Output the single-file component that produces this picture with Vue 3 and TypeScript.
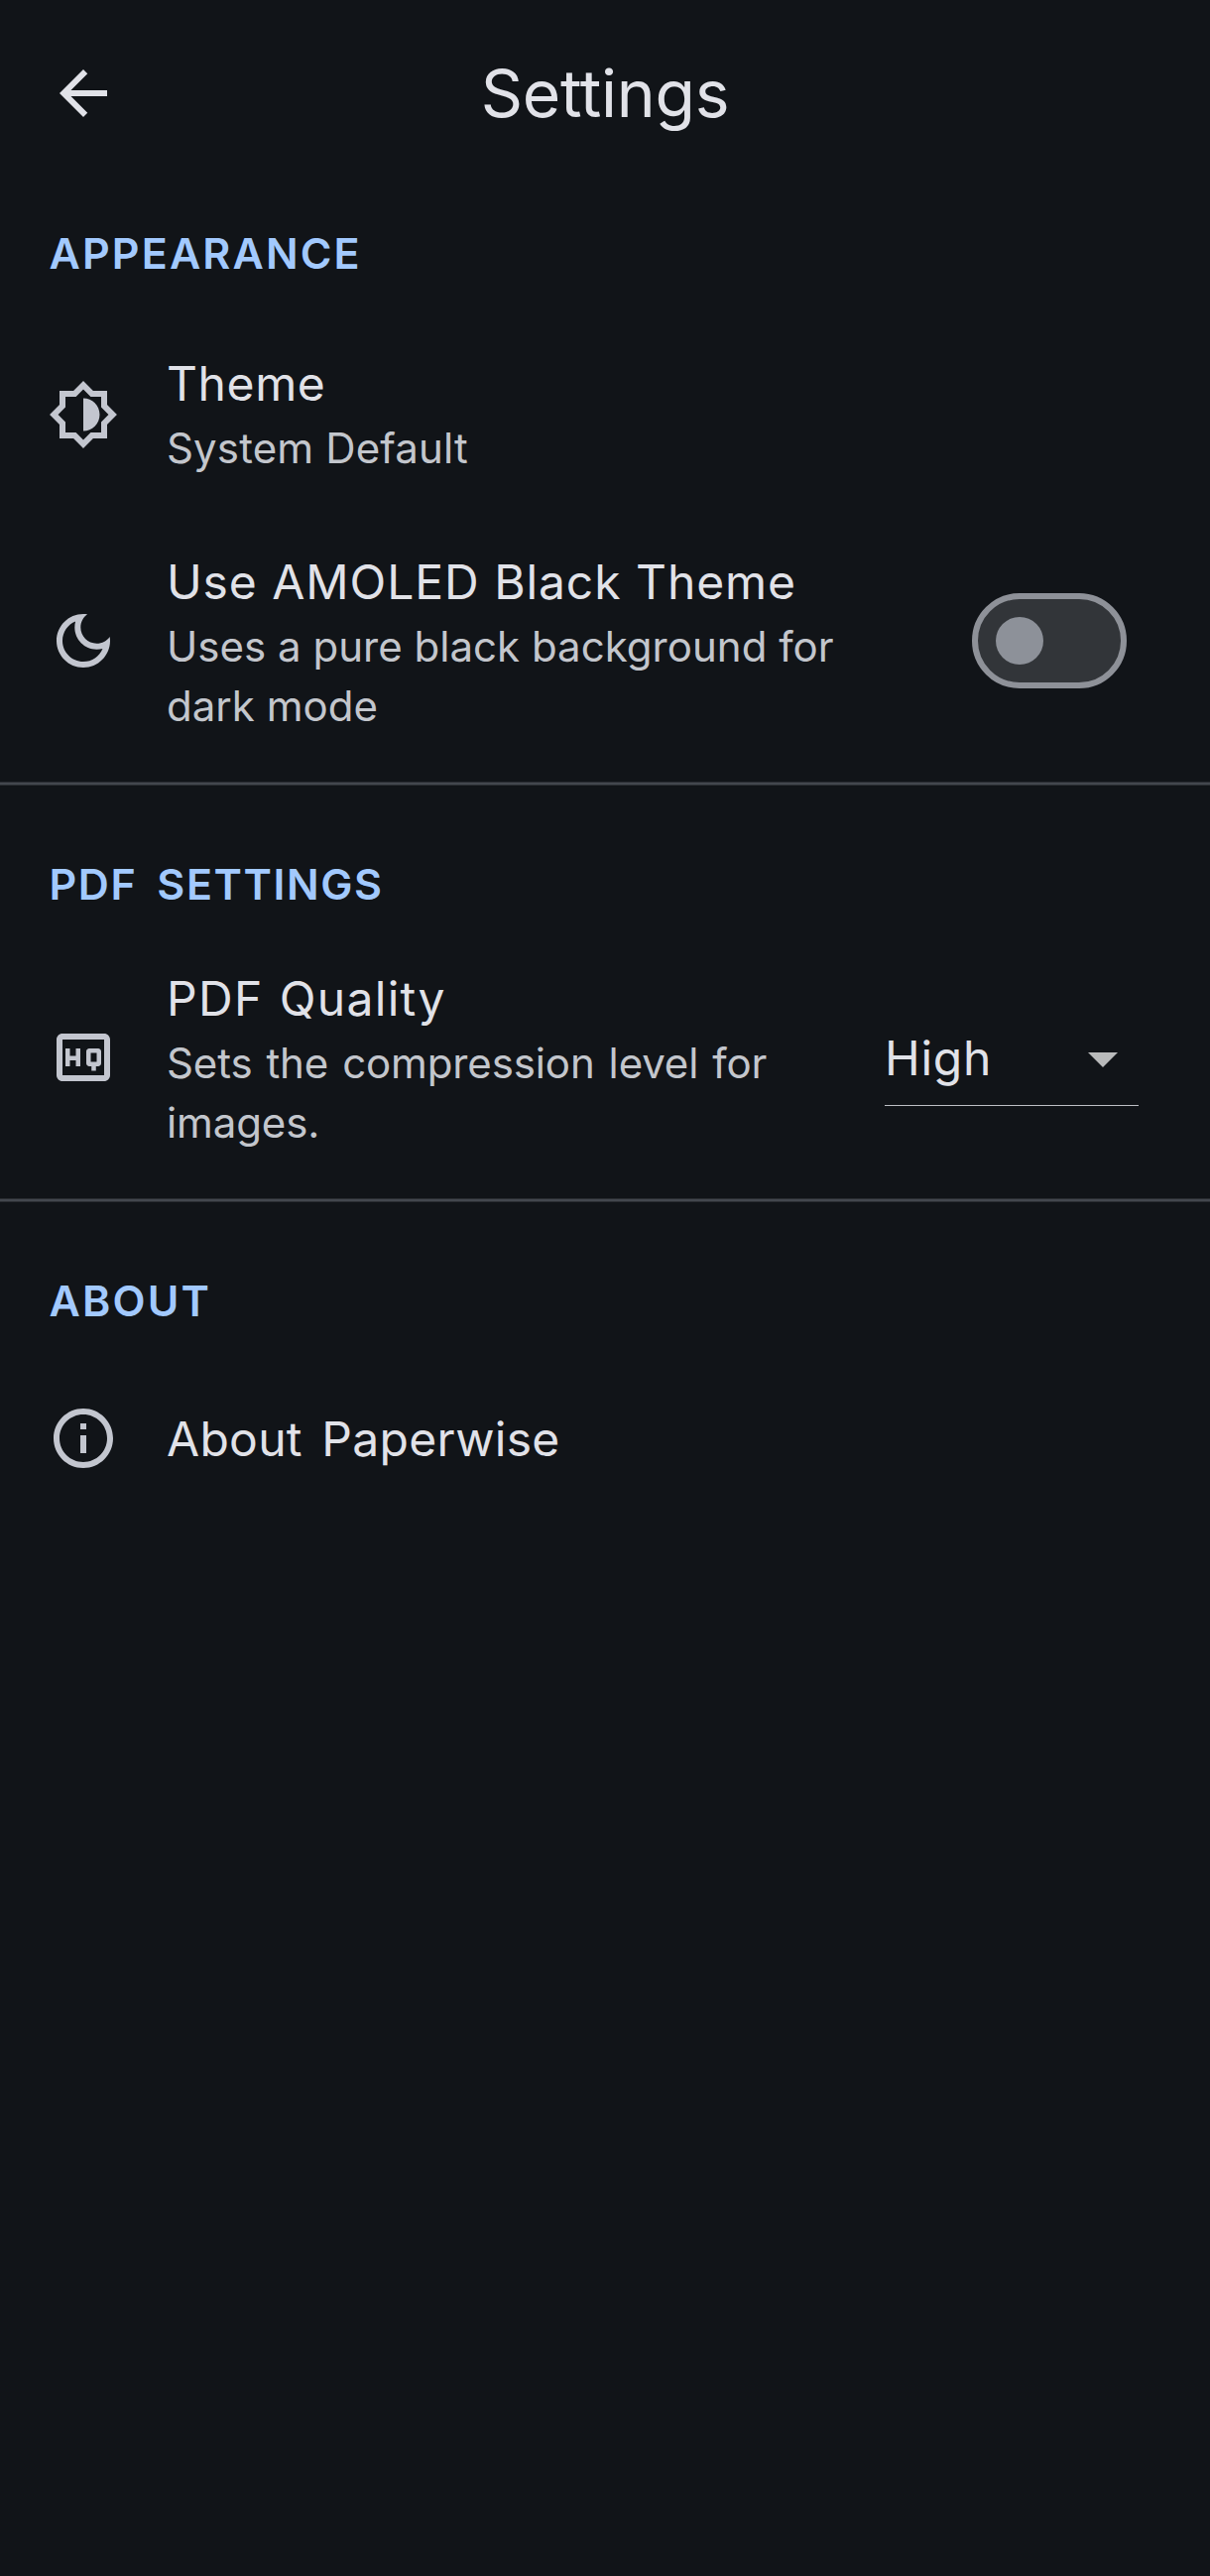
<script setup lang="ts">
import { ref } from 'vue'

const amoled = ref(false)
const quality = ref('High')
</script>

<template>
  <main class="screen">
    <header class="bar">
      <svg class="icon back" viewBox="0 0 24 24"><path d="M20 11H7.83l5.59-5.59L12 4l-8 8 8 8 1.41-1.41L7.83 13H20v-2z" /></svg>
      <h1>Settings</h1>
    </header>

    <section class="appearance">
      <h2>APPEARANCE</h2>
      <div class="row theme">
        <svg class="icon" viewBox="0 0 24 24"><path d="M20 8.69V4h-4.69L12 .69 8.69 4H4v4.69L.69 12 4 15.31V20h4.69L12 23.31 15.31 20H20v-4.69L23.31 12 20 8.69zm-2 5.79V18h-3.52L12 20.48 9.52 18H6v-3.52L3.52 12 6 9.52V6h3.52L12 3.52 14.48 6H18v3.52L20.48 12 18 14.48zM12 6.5v11c3.03 0 5.5-2.47 5.5-5.5S15.03 6.5 12 6.5z" /></svg>
        <div class="text">
          <div class="title">Theme</div>
          <div class="sub">System Default</div>
        </div>
      </div>
      <div class="row tall amoled">
        <svg class="icon" viewBox="0 0 24 24"><path d="M9.37 5.51C9.19 6.15 9.1 6.82 9.1 7.5c0 4.08 3.32 7.4 7.4 7.4.68 0 1.35-.09 1.99-.27C17.45 17.19 14.93 19 12 19c-3.86 0-7-3.14-7-7 0-2.93 1.81-5.45 4.37-6.49zM12 3c-4.97 0-9 4.03-9 9s4.03 9 9 9 9-4.03 9-9c0-.46-.04-.92-.1-1.36-.98 1.37-2.58 2.26-4.4 2.26-2.98 0-5.4-2.42-5.4-5.4 0-1.81.89-3.42 2.26-4.4C12.92 3.04 12.46 3 12 3z" /></svg>
        <div class="text">
          <div class="title">Use AMOLED Black Theme</div>
          <div class="sub">Uses a pure black background for<br>dark mode</div>
        </div>
        <button class="switch" :class="{ on: amoled }" role="switch" :aria-checked="amoled" @click="amoled = !amoled"><span class="thumb"></span></button>
      </div>
    </section>

    <div class="divider"></div>

    <section class="pdf">
      <h2>PDF SETTINGS</h2>
      <div class="row tall quality">
        <svg class="icon" viewBox="0 0 24 24"><path d="M19 4H5c-1.11 0-2 .9-2 2v12c0 1.1.89 2 2 2h14c1.1 0 2-.9 2-2V6c0-1.1-.9-2-2-2zm0 14H5V6h14v12zM7.5 13h2v2H11V9H9.5v2.5h-2V9H6v6h1.5v-2zm6.5 2h.75v1.5h1.5V15H17c.55 0 1-.45 1-1v-4c0-.55-.45-1-1-1h-3c-.55 0-1 .45-1 1v4c0 .55.45 1 1 1zm.5-4.5h2v3h-2v-3z" /></svg>
        <div class="text">
          <div class="title">PDF Quality</div>
          <div class="sub">Sets the compression level for<br>images.</div>
        </div>
        <div class="select">
          <span>{{ quality }}</span>
          <svg class="icon caret" viewBox="0 0 24 24"><path d="M7 10l5 5 5-5z" /></svg>
        </div>
      </div>
    </section>

    <div class="divider"></div>

    <section>
      <h2>ABOUT</h2>
      <div class="row about">
        <svg class="icon" viewBox="0 0 24 24"><path d="M11 7h2v2h-2zm0 4h2v6h-2zm1-9C6.48 2 2 6.48 2 12s4.48 10 10 10 10-4.48 10-10S17.52 2 12 2zm0 18c-4.41 0-8-3.59-8-8s3.59-8 8-8 8 3.59 8 8-3.59 8-8 8z" /></svg>
        <div class="text">
          <div class="title">About Paperwise</div>
        </div>
      </div>
    </section>
  </main>
</template>

<style>
body { background: #111418; }
</style>

<style scoped>
.screen {
  box-sizing: border-box;
  min-height: 2597px;
  background: #111418;
  color: #e1e2e8;
  font-family: Inter, "Noto Sans", sans-serif;
}
.bar {
  display: grid;
  grid-template-columns: 72px 1fr 72px;
  align-items: center;
  height: 188px;
  padding: 0 48px;
}
h1 { margin: 0; font-size: 66px; font-weight: 400; line-height: 84px; letter-spacing: -0.25px; text-align: center; }
.icon { display: block; flex: none; width: 72px; height: 72px; fill: #c3c6cf; }
.back { fill: #e1e2e8; }
section { padding-top: 69px; }
.appearance { padding-top: 37px; }
h2 { margin: 0 0 25px 49.5px; color: #a2c9fe; font-size: 43px; font-weight: 600; line-height: 60px; letter-spacing: 2.15px; }
.pdf h2 { letter-spacing: 1.59px; word-spacing: 7.6px; }

.row { display: flex; align-items: center; gap: 48px; padding: 0 72px 0 48px; }
.text { flex: 1; white-space: nowrap; }
.title { font-size: 48px; line-height: 70px; letter-spacing: 0.6px; }
.sub { color: #c3c6cc; font-size: 42px; line-height: 60px; letter-spacing: 0.15px; }

.theme { height: 216px; }
.theme .text { padding-bottom: 2px; }
.tall { height: 240px; }
.tall .text { padding-top: 2px; }
.amoled .title { letter-spacing: 0.9px; word-spacing: 0.2px; }
.amoled .sub { letter-spacing: 0.02px; }
.quality .title { letter-spacing: 1.3px; word-spacing: 1.5px; }
.quality .sub { letter-spacing: -0.12px; word-spacing: 2.3px; }
.about { height: 168px; }
.about .text { padding-top: 2px; }
.about .title { letter-spacing: 0.28px; word-spacing: 5.8px; }

.switch {
  display: flex;
  align-items: center;
  box-sizing: border-box;
  width: 156px;
  height: 96px;
  margin-right: 12px;
  padding: 0 18px;
  border: 6px solid #8e9198;
  border-radius: 48px;
  background: #323539;
}
.switch.on { justify-content: flex-end; }
.thumb { width: 48px; height: 48px; border-radius: 50%; background: #8d9199; }
.divider { height: 2px; margin-top: 22px; border: solid #2a2d32; border-width: 1px 0; background: #43474e; }
.select {
  display: flex;
  align-items: center;
  justify-content: space-between;
  box-sizing: border-box;
  width: 256px;
  height: 98px;
  padding-top: 2px;
  border-bottom: 1px solid #bdbfc4;
  font-size: 48px;
  letter-spacing: 0.76px;
}
.caret { fill: #b9babb; }
</style>
